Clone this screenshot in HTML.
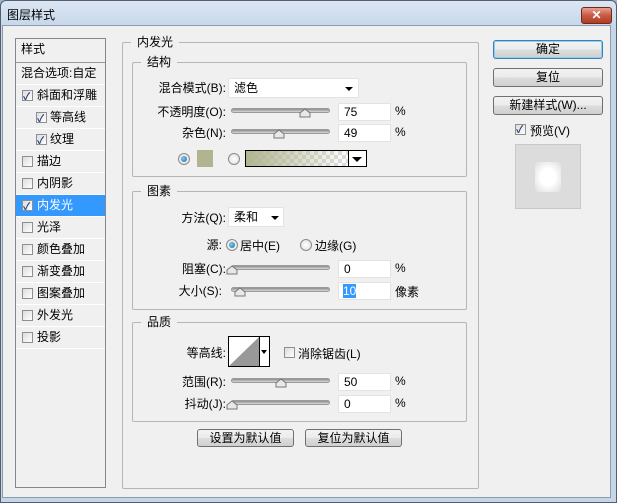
<!DOCTYPE html>
<html><head><meta charset="utf-8"><style>
*{box-sizing:border-box}
body{margin:0;width:617px;height:503px;overflow:hidden;background:#9fb4cc;font-family:"Liberation Sans","Noto Sans CJK SC",sans-serif;font-size:12px;color:#000}
.a{position:absolute}
#win{position:absolute;left:0;top:0;width:617px;height:503px;background:linear-gradient(#dbe6f3,#c5d6ea 27px,#c5d6ea);border:1px solid #555e6b;border-radius:6px 6px 0 0}
#body{position:absolute;left:2px;top:25px;width:609px;height:473px;background:#f0f0f0;border:1px solid #8d9aab}
.gb{position:absolute;border:1px solid #b5b5b5;border-radius:2px}
.gt{position:absolute;top:-9px;left:8px;background:#f0f0f0;padding:0 6px;font-size:12px;line-height:16px}
.btn{position:absolute;border:1px solid #707070;border-radius:3px;background:linear-gradient(#f2f2f2,#ebebeb 50%,#dddddd 51%,#cfcfcf);text-align:center;font-size:12px;line-height:16px}
.list{position:absolute;left:15px;top:38px;width:91px;height:450px;border:1px solid #828790;background:#f0f0f0}
.it{position:absolute;left:0;width:89px;height:22px;border-bottom:1px solid #fff;line-height:21px;padding-left:21px;font-size:12px}
.cb{position:absolute;width:11px;height:11px;border:1px solid #8e8f8f;background:linear-gradient(135deg,#dcdcdc,#fff)}
.cb.c::after{content:"✓";position:absolute;left:0;top:-4px;font-size:10px;color:#2a3f7a;font-weight:bold}
.lab{position:absolute;text-align:right;font-size:12px;line-height:16px}
.tr{position:absolute;height:5px;border:1px solid #9a9a9a;border-radius:3px;background:linear-gradient(#8c8c8c,#d8d8d8)}
.th{position:absolute;width:0;height:0}
.inp{position:absolute;height:18px;background:#fff;border:1px solid #e3e3e3;font-size:12px;line-height:17px;padding-left:5px}
.sel{position:absolute;height:20px;background:#fff;border:1px solid #e3e3e3;font-size:12px;line-height:19px;padding-left:5px}
.arr{position:absolute;width:0;height:0;border-left:4px solid transparent;border-right:4px solid transparent;border-top:4px solid #000}
.rad{position:absolute;width:12px;height:12px;border-radius:50%;border:1px solid #8a8a8a;background:radial-gradient(#fff,#dcdcdc)}
.rad.on::after{content:"";position:absolute;left:2px;top:2px;width:6px;height:6px;border-radius:50%;background:radial-gradient(circle at 40% 40%,#7fd0f5,#12609a)}
</style></head><body>
<div id="win">
<div class="a" style="left:6px;top:5px;font-size:12px">图层样式</div>
<div class="a" style="left:580px;top:6px;width:31px;height:17px;border:1px solid #6b2a1e;border-radius:3px;background:linear-gradient(#e8a08f,#c75a45 50%,#b23b22);color:#fff;text-align:center;font-weight:bold;line-height:15px;font-size:12px">✕</div>
</div>
<div id="body"></div>

<div class="list">
<div class="it" style="top:0;padding-left:5px;height:24px;border-bottom:1px solid #999;line-height:20px">样式</div>
<div class="it" style="top:24px;padding-left:5px">混合选项:自定</div>
<div class="it" style="top:46px"><span class="cb c" style="left:6px;top:5px"></span>斜面和浮雕</div>
<div class="it" style="top:68px;padding-left:34px"><span class="cb c" style="left:20px;top:5px"></span>等高线</div>
<div class="it" style="top:90px;padding-left:34px"><span class="cb c" style="left:20px;top:5px"></span>纹理</div>
<div class="it" style="top:112px"><span class="cb" style="left:6px;top:5px"></span>描边</div>
<div class="it" style="top:134px"><span class="cb" style="left:6px;top:5px"></span>内阴影</div>
<div class="it" style="top:156px;background:#3399ff;color:#fff"><span class="cb c" style="left:6px;top:5px"></span>内发光</div>
<div class="it" style="top:178px"><span class="cb" style="left:6px;top:5px"></span>光泽</div>
<div class="it" style="top:200px"><span class="cb" style="left:6px;top:5px"></span>颜色叠加</div>
<div class="it" style="top:222px"><span class="cb" style="left:6px;top:5px"></span>渐变叠加</div>
<div class="it" style="top:244px"><span class="cb" style="left:6px;top:5px"></span>图案叠加</div>
<div class="it" style="top:266px"><span class="cb" style="left:6px;top:5px"></span>外发光</div>
<div class="it" style="top:288px"><span class="cb" style="left:6px;top:5px"></span>投影</div>
</div>

<div class="gb" style="left:122px;top:42px;width:357px;height:447px"><div class="gt">内发光</div></div>
<div class="gb" style="left:132px;top:62px;width:335px;height:115px"><div class="gt">结构</div></div>
<div class="gb" style="left:132px;top:191px;width:335px;height:119px"><div class="gt">图素</div></div>
<div class="gb" style="left:132px;top:322px;width:335px;height:100px"><div class="gt">品质</div></div>

<!-- structure -->
<div class="lab" style="left:140px;top:80px;width:86px">混合模式(B):</div>
<div class="sel" style="left:228px;top:78px;width:131px">滤色</div><div class="arr" style="left:345px;top:87px"></div>
<div class="lab" style="left:140px;top:104px;width:86px">不透明度(O):</div>
<div class="tr" style="left:231px;top:108px;width:99px"></div>
<svg class="a" style="left:299px;top:108px" width="12" height="10"><path d="M1 9V5L6 1L11 5V9Z" fill="#e8e8e8" stroke="#777"/></svg>
<div class="inp" style="left:338px;top:103px;width:53px">75</div><div class="a" style="left:395px;top:104px">%</div>
<div class="lab" style="left:140px;top:125px;width:86px">杂色(N):</div>
<div class="tr" style="left:231px;top:129px;width:99px"></div>
<svg class="a" style="left:273px;top:129px" width="12" height="10"><path d="M1 9V5L6 1L11 5V9Z" fill="#e8e8e8" stroke="#777"/></svg>
<div class="inp" style="left:338px;top:124px;width:53px">49</div><div class="a" style="left:395px;top:125px">%</div>
<div class="rad on" style="left:178px;top:153px"></div>
<div class="a" style="left:197px;top:150px;width:16px;height:17px;background:#b1b48f"></div>
<div class="rad" style="left:228px;top:153px"></div>
<div class="a" style="left:245px;top:150px;width:104px;height:17px;border:1px solid #000;background:linear-gradient(90deg,#b1b48f,rgba(177,180,143,0)),repeating-conic-gradient(#ddd 0 25%,#fff 0 50%) 0 0/8px 8px"></div>
<div class="a" style="left:348px;top:150px;width:19px;height:17px;border:1px solid #000;background:#fff"></div><div class="arr" style="left:353px;top:157px;border-top-width:5px;border-left-width:5px;border-right-width:5px;left:352px"></div>

<!-- elements -->
<div class="lab" style="left:140px;top:210px;width:86px">方法(Q):</div>
<div class="sel" style="left:228px;top:207px;width:56px">柔和</div><div class="arr" style="left:271px;top:216px"></div>
<div class="lab" style="left:140px;top:237px;width:82px">源:</div>
<div class="rad on" style="left:226px;top:239px"></div><div class="a" style="left:240px;top:237px">居中(E)</div>
<div class="rad" style="left:300px;top:239px"></div><div class="a" style="left:315px;top:237px">边缘(G)</div>
<div class="lab" style="left:140px;top:261px;width:86px">阻塞(C):</div>
<div class="tr" style="left:231px;top:265px;width:99px"></div>
<svg class="a" style="left:226px;top:265px" width="12" height="10"><path d="M1 9V5L6 1L11 5V9Z" fill="#e8e8e8" stroke="#777"/></svg>
<div class="inp" style="left:338px;top:260px;width:53px">0</div><div class="a" style="left:395px;top:261px">%</div>
<div class="lab" style="left:140px;top:283px;width:82px">大小(S):</div>
<div class="tr" style="left:231px;top:287px;width:99px"></div>
<svg class="a" style="left:234px;top:287px" width="12" height="10"><path d="M1 9V5L6 1L11 5V9Z" fill="#e8e8e8" stroke="#777"/></svg>
<div class="inp" style="left:338px;top:282px;width:53px"><span style="background:#3399ff;color:#fff;margin-left:-1px">10</span></div><div class="a" style="left:395px;top:283px">像素</div>

<!-- quality -->
<div class="lab" style="left:140px;top:345px;width:86px">等高线:</div>
<div class="a" style="left:228px;top:336px;width:42px;height:31px;border:1px solid #000;background:#fff"></div>
<svg class="a" style="left:229px;top:337px" width="30" height="29"><path d="M0 29L30 0V29Z" fill="#999"/></svg>
<div class="a" style="left:259px;top:337px;width:1px;height:29px;background:#000"></div>
<div class="arr" style="left:261px;top:350px;border-left-width:3px;border-right-width:3px"></div>
<div class="cb" style="left:284px;top:347px"></div><div class="a" style="left:298px;top:345px">消除锯齿(L)</div>
<div class="lab" style="left:140px;top:374px;width:86px">范围(R):</div>
<div class="tr" style="left:231px;top:378px;width:99px"></div>
<svg class="a" style="left:275px;top:378px" width="12" height="10"><path d="M1 9V5L6 1L11 5V9Z" fill="#e8e8e8" stroke="#777"/></svg>
<div class="inp" style="left:338px;top:373px;width:53px">50</div><div class="a" style="left:395px;top:374px">%</div>
<div class="lab" style="left:140px;top:396px;width:86px">抖动(J):</div>
<div class="tr" style="left:231px;top:400px;width:99px"></div>
<svg class="a" style="left:226px;top:400px" width="12" height="10"><path d="M1 9V5L6 1L11 5V9Z" fill="#e8e8e8" stroke="#777"/></svg>
<div class="inp" style="left:338px;top:395px;width:53px">0</div><div class="a" style="left:395px;top:396px">%</div>

<div class="btn" style="left:197px;top:429px;width:97px;height:18px">设置为默认值</div>
<div class="btn" style="left:305px;top:429px;width:97px;height:18px">复位为默认值</div>

<div class="btn" style="left:493px;top:40px;width:110px;height:19px;border-color:#3c7fb1;box-shadow:inset 0 0 0 1px #8fd0f0">确定</div>
<div class="btn" style="left:493px;top:68px;width:110px;height:19px">复位</div>
<div class="btn" style="left:493px;top:96px;width:110px;height:19px">新建样式(W)...</div>
<div class="cb c" style="left:515px;top:124px"></div><div class="a" style="left:530px;top:122px">预览(V)</div>
<div class="a" style="left:515px;top:144px;width:66px;height:65px;background:#dcdcdc;border:1px solid #c8c8c8"></div>
<div class="a" style="left:535px;top:162px;width:26px;height:30px;background:radial-gradient(#fff 40%,#e8e8e8 80%,#dcdcdc)"></div>
</body></html>
